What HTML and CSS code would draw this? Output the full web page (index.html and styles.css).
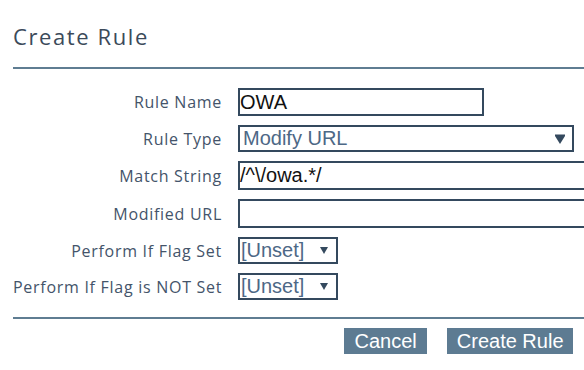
FILE: index.html
```html
<!DOCTYPE html>
<html>
<head>
<meta charset="utf-8">
<link rel="stylesheet" href="styles.css">
</head>
<body>
<div class="dialog">
  <div class="header"><h1 class="title">Create Rule</h1></div>
  <div class="form">
    <label class="label">Rule Name</label>
    <div class="field"><div class="input w-name">OWA</div></div>

    <label class="label">Rule Type</label>
    <div class="field"><div class="select w-type"><span class="sel-text">Modify URL</span>
      <svg class="arrow-big" width="10" height="10" viewBox="0 0 10 10"><polygon points="0,0.5 10,0.5 10,2 5,10 0,2" fill="#34495e"/></svg></div></div>

    <label class="label">Match String</label>
    <div class="field"><div class="input w-wide tall">/^\/owa.*/</div></div>

    <label class="label">Modified URL</label>
    <div class="field"><div class="input w-wide tall"></div></div>

    <label class="label">Perform If Flag Set</label>
    <div class="field"><div class="select w-flag"><span class="sel-text flag">[Unset]</span>
      <svg class="arrow-small" width="8" height="7" viewBox="0 0 8 7"><polygon points="0,0 8,0 4,7" fill="#34495e"/></svg></div></div>

    <label class="label">Perform If Flag is NOT Set</label>
    <div class="field"><div class="select w-flag"><span class="sel-text flag">[Unset]</span>
      <svg class="arrow-small" width="8" height="7" viewBox="0 0 8 7"><polygon points="0,0 8,0 4,7" fill="#34495e"/></svg></div></div>
  </div>
  <div class="footer">
    <button class="btn btn-cancel">Cancel</button>
    <button class="btn btn-create">Create Rule</button>
  </div>
</div>
</body>
</html>
```

FILE: styles.css
```css
html, body {
  margin: 0;
  padding: 0;
  background: #ffffff;
  overflow: hidden;
}
body {
  width: 584px;
  height: 370px;
}
.dialog {
  padding-left: 13px;
}
.header {
  padding-top: 24px;
  padding-bottom: 19px;
  border-bottom: 2px solid #5f7d92;
}
.title {
  margin: 0;
  font-family: "Open Sans", sans-serif;
  font-weight: 400;
  font-size: 22px;
  line-height: 24px;
  letter-spacing: 1.6px;
  color: #3b4a5a;
}
.form {
  display: grid;
  grid-template-columns: 209px 1fr;
  column-gap: 16px;
  row-gap: 9px;
  margin-top: 19px;
  align-items: center;
}
.label {
  text-align: right;
  font-family: "Open Sans", sans-serif;
  font-size: 16px;
  letter-spacing: 0.72px;
  color: #44546a;
  white-space: nowrap;
}
.field {
  display: flex;
  overflow: visible;
  white-space: nowrap;
}
.input, .select {
  box-sizing: border-box;
  border: 2px solid #34495e;
  font-family: "Liberation Sans", Arial, sans-serif;
  font-size: 20px;
  display: flex;
  align-items: center;
  flex-shrink: 0;
}
.input {
  height: 28px;
  padding-left: 0px;
  color: #111111;
}
.input.tall { height: 29px; }
.select {
  height: 27px;
  color: #4d6886;
  justify-content: space-between;
}
.w-name { width: 246px; }
.w-wide { width: 400px; }
.w-type { width: 336px; padding-left: 3px; padding-right: 7px; }
.w-flag { width: 100px; padding-left: 1px; padding-right: 8px; }
.sel-text { line-height: 23px; }
.arrow-big { display: block; }
.arrow-small { display: block; }
.footer {
  margin-top: 17px;
  border-top: 2px solid #5f7d92;
  padding-top: 9px;
  padding-right: 11px;
  display: flex;
  justify-content: flex-end;
  column-gap: 20px;
}
.btn {
  border: none;
  margin: 0;
  background: #5d7b92;
  color: #ffffff;
  font-family: "Liberation Sans", Arial, sans-serif;
  font-size: 20px;
  height: 26px;
  line-height: 26px;
  padding: 0 10px;
}
.btn-cancel { padding: 0 10.5px; }
.btn-create { padding: 0 9.5px; }
```
